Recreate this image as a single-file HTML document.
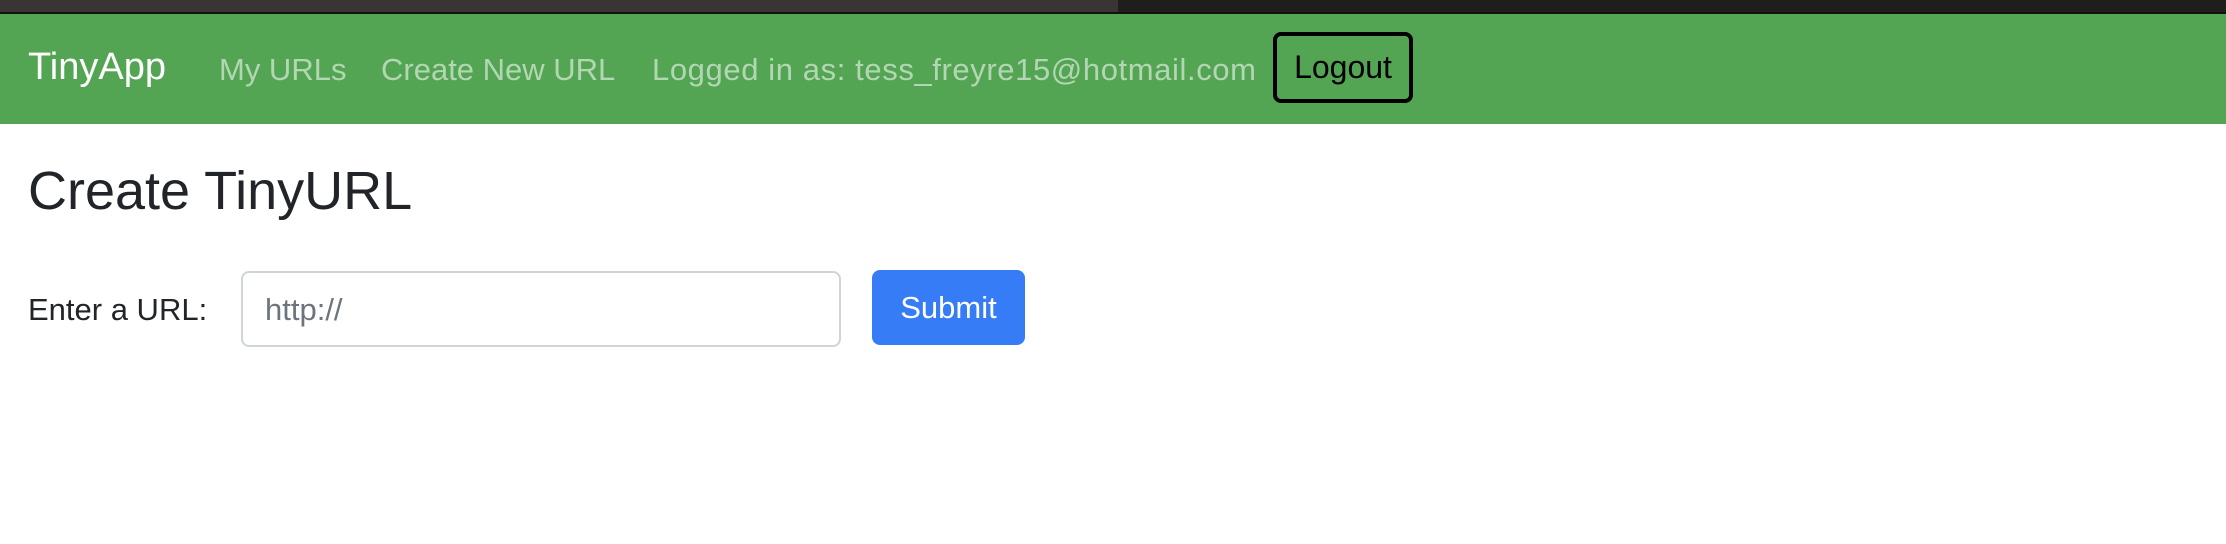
<!DOCTYPE html>
<html><head><style>
html,body{margin:0;padding:0;width:2226px;height:544px;background:#fff;overflow:hidden;font-family:"Liberation Sans",sans-serif;}
.a{position:absolute;white-space:nowrap;}
</style></head><body>
<div class="a" style="left:0;top:0;width:1118px;height:12px;background:#3a3435"></div>
<div class="a" style="left:1118px;top:0;width:1108px;height:12px;background:#1f1e1d"></div>
<div class="a" style="left:0;top:12px;width:2226px;height:2px;background:#111"></div>
<div class="a" style="left:0;top:14px;width:2226px;height:110px;background:#53a553"></div>
<div class="a" style="left:28px;top:45px;font-size:38px;line-height:44px;color:#fff">TinyApp</div>
<div class="a" style="left:219px;top:52px;font-size:31px;line-height:36px;color:#b3d6b3">My URLs</div>
<div class="a" style="left:381px;top:52px;font-size:31px;line-height:36px;color:#b3d6b3">Create New URL</div>
<div class="a" style="left:652px;top:52px;font-size:31px;line-height:36px;color:#b3d6b3;letter-spacing:0.6px">Logged in as: tess_freyre15@hotmail.com</div>
<div class="a" style="left:1273px;top:32px;width:132px;height:63px;border:4px solid #000;border-radius:8px;font-size:32px;line-height:63px;text-align:center;color:#000">Logout</div>
<div class="a" style="left:28px;top:159px;font-size:54px;line-height:64px;color:#212529">Create TinyURL</div>
<div class="a" style="left:28px;top:292px;font-size:31px;line-height:36px;color:#212529">Enter a URL:</div>
<div class="a" style="left:241px;top:271px;width:596px;height:72px;border:2px solid #ced4da;border-radius:8px;"></div>
<div class="a" style="left:265px;top:292px;font-size:31px;line-height:36px;color:#6c757d">http://</div>
<div class="a" style="left:872px;top:270px;width:153px;height:75px;background:#367cf6;border-radius:8px;color:#fff;font-size:31px;line-height:75px;text-align:center">Submit</div>
</body></html>
